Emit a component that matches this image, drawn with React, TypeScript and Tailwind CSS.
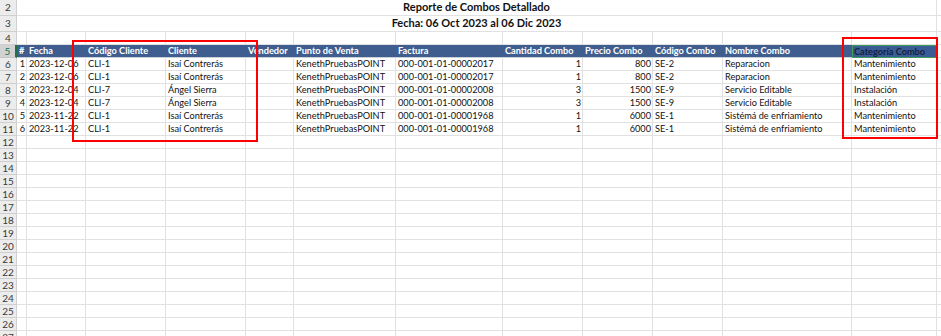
const cols = [
  { w: "w-[10px]", num: true },
  { w: "w-[59px]" },
  { w: "w-[80px]" },
  { w: "w-[80px]" },
  { w: "w-[48px]" },
  { w: "w-[102px]" },
  { w: "w-[107px]" },
  { w: "w-[80px]", num: true },
  { w: "w-[70px]", num: true },
  { w: "w-[70px]" },
  { w: "w-[129px]" },
  { w: "w-[85px]" },
];

const headers = [
  "#",
  "Fecha",
  "Código Cliente",
  "Cliente",
  "Vendedor",
  "Punto de Venta",
  "Factura",
  "Cantidad Combo",
  "Precio Combo",
  "Código Combo",
  "Nombre Combo",
  "Categoría Combo",
];

const data = [
  ["1", "2023-12-06", "CLI-1", "Isaí Contrerás", "", "KenethPruebasPOINT", "000-001-01-00002017", "1", "800", "SE-2", "Reparacion", "Mantenimiento"],
  ["2", "2023-12-06", "CLI-1", "Isaí Contrerás", "", "KenethPruebasPOINT", "000-001-01-00002017", "1", "800", "SE-2", "Reparacion", "Mantenimiento"],
  ["3", "2023-12-04", "CLI-7", "Ángel Sierra", "", "KenethPruebasPOINT", "000-001-01-00002008", "3", "1500", "SE-9", "Servicio Editable", "Instalación"],
  ["4", "2023-12-04", "CLI-7", "Ángel Sierra", "", "KenethPruebasPOINT", "000-001-01-00002008", "3", "1500", "SE-9", "Servicio Editable", "Instalación"],
  ["5", "2023-11-22", "CLI-1", "Isaí Contrerás", "", "KenethPruebasPOINT", "000-001-01-00001968", "1", "6000", "SE-1", "Sistémá de enfriamiento", "Mantenimiento"],
  ["6", "2023-11-22", "CLI-1", "Isaí Contrerás", "", "KenethPruebasPOINT", "000-001-01-00001968", "1", "6000", "SE-1", "Sistémá de enfriamiento", "Mantenimiento"],
];

const RowHead = ({ n, active }: { n: number; active?: boolean }) => (
  <div
    className={
      active
        ? "w-[17px] shrink-0 flex items-center justify-center border-b border-r-2 border-b-[#c6c6c6] border-r-[#217346] bg-[#d2d2d2] text-[#217346] text-[10px]"
        : "w-[17px] shrink-0 flex items-center justify-center border-b border-r border-[#cfcfcf] bg-[#ececec] text-[#3a3a3a] text-[10px]"
    }
  >
    {n}
  </div>
);

const Rest = () => <div className="flex-1 border-b border-[#e1e1e1]" />;

export default function App() {
  const emptyRows = Array.from({ length: 16 }, (_, i) => 12 + i);

  return (
    <div className="relative w-[941px] h-[336px] overflow-hidden bg-white text-[#111] font-['Lato',sans-serif] text-[9.2px]">
      {/* titulo */}
      <div className="flex h-[16px]">
        <RowHead n={2} />
        <div className="w-[920px] shrink-0 flex items-center justify-center border-b border-r border-[#e1e1e1] font-bold text-[11px]">
          Reporte de Combos Detallado
        </div>
        <Rest />
      </div>
      <div className="flex h-[16px]">
        <RowHead n={3} />
        <div className="w-[920px] shrink-0 flex items-center justify-center border-b border-r border-[#e1e1e1] font-bold text-[11px]">
          Fecha: 06 Oct 2023 al 06 Dic 2023
        </div>
        <Rest />
      </div>
      <div className="flex h-[13px]">
        <RowHead n={4} />
        {cols.map((c, i) => (
          <div key={i} className={`${c.w} shrink-0 border-b border-r border-[#e1e1e1]`} />
        ))}
        <Rest />
      </div>

      {/* encabezado */}
      <div className="flex h-[13px]">
        <RowHead n={5} active />
        {headers.map((h, i) =>
          i === 11 ? (
            <div
              key={i}
              className={`${cols[i].w} shrink-0 border border-[#3f9a5e] bg-[#3a5c94] text-[#16233f] font-bold leading-[11px] pl-[1px] whitespace-nowrap overflow-hidden`}
            >
              {h}
            </div>
          ) : (
            <div
              key={i}
              className={`${cols[i].w} shrink-0 bg-[#3f5d8f] border-b border-[#c9d0da] text-white font-bold leading-[12px] pl-[2px] whitespace-nowrap overflow-visible`}
            >
              {h}
            </div>
          )
        )}
        <Rest />
      </div>

      {data.map((r, ri) => (
        <div key={ri} className="flex h-[13px]">
          <RowHead n={6 + ri} />
          {r.map((v, i) => (
            <div
              key={i}
              className={`${cols[i].w} shrink-0 border-b border-r border-[#e1e1e1] leading-[12px] whitespace-nowrap overflow-hidden ${
                cols[i].num ? "text-right pr-[1px]" : "pl-[2px]"
              }`}
            >
              {v}
            </div>
          ))}
          <Rest />
        </div>
      ))}

      {emptyRows.map((n) => (
        <div key={n} className="flex h-[13px]">
          <RowHead n={n} />
          {cols.map((c, i) => (
            <div key={i} className={`${c.w} shrink-0 border-b border-r border-[#e1e1e1]`} />
          ))}
          <Rest />
        </div>
      ))}

      {/* marcas rojas */}
      <div className="absolute left-[72px] top-[40px] w-[186px] h-[102px] border-2 border-[#ff0000]" />
      <div className="absolute left-[842px] top-[37px] w-[96px] h-[102px] border-2 border-[#ff0000]" />
    </div>
  );
}
